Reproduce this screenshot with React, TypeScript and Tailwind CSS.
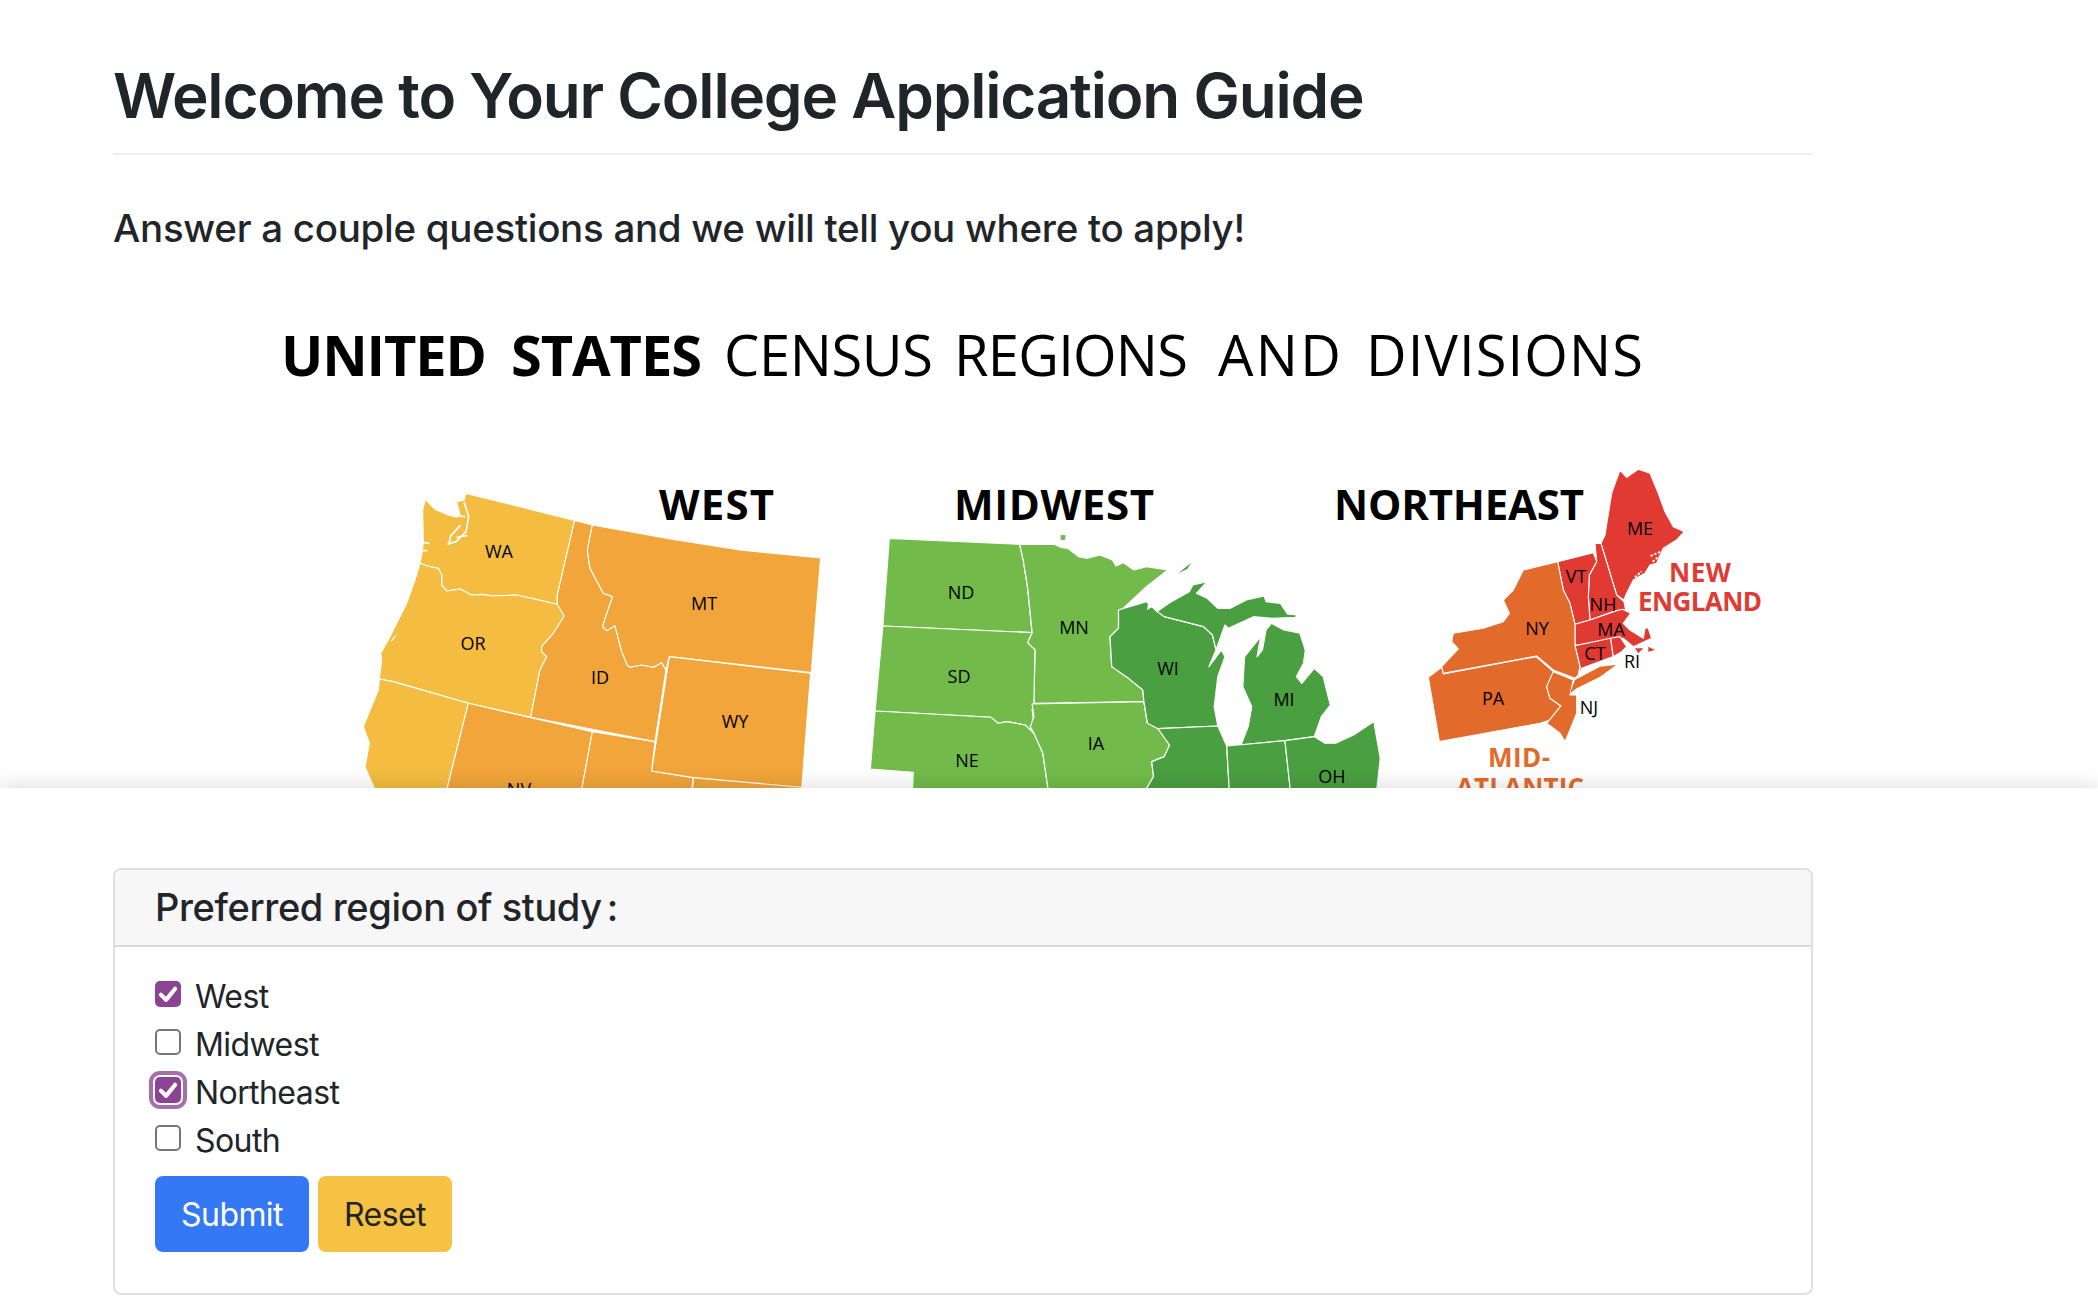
const ink = "#000";

function Label({ x, y, t }: { x: number; y: number; t: string }) {
  return (
    <text x={x} y={y + 6.5} textAnchor="middle" fontSize={18} fill={ink}>
      {t}
    </text>
  );
}

const yellow = "#f4bd41";
const orange = "#f1a53a";
const light = "#72bb4a";
const dark = "#4aa040";
const red = "#e03a33";
const rust = "#e26a2a";

const west: [string, string][] = [
  [yellow, "M378,100 L704,181 L652,405 L652,433 L530,405 L490,408 L460,408 L425,403 L395,405 L360,387 L320,393 L305,375 L305,345 L295,325 L262,318 L240,310 L245,285 L250,250 L248,150 L256,118 L285,148 L325,165 L350,172 L360,165 L350,125 L372,120 Z"],
  [yellow, "M240,310 L262,318 L295,325 L305,345 L305,375 L320,393 L360,387 L395,405 L425,403 L460,408 L530,405 L652,433 L673,468 L640,520 L605,560 L605,575 L620,590 L600,630 L572,772 L385,730 L160,665 L118,657 L125,600 L122,580 L150,530 L170,490 L200,430 L225,360 Z"],
  [yellow, "M118,657 L160,665 L385,730 L320,990 L105,990 L75,920 L88,850 L70,800 L115,690 Z"],
  [orange, "M385,730 L757,815 L725,990 L320,990 Z"],
  [orange, "M757,815 L945,845 L935,933 L1060,953 L1055,990 L725,990 Z"],
  [orange, "M704,181 L757,195 L742,270 L750,325 L790,400 L818,410 L797,470 L788,500 L800,512 L825,497 L845,575 L862,615 L870,622 L905,615 L940,622 L965,608 L978,630 L945,845 L572,772 L600,630 L620,590 L605,575 L605,560 L640,520 L673,468 L652,433 L652,405 Z"],
  [orange, "M757,195 L1000,238 L1200,270 L1442,294 L1414,638 L988,590 L978,630 L965,608 L940,622 L905,615 L870,622 L862,615 L845,575 L825,497 L800,512 L788,500 L797,470 L818,410 L790,400 L750,325 L742,270 Z"],
  [orange, "M988,590 L1412,640 L1385,990 L1060,953 L935,933 Z"],
  [orange, "M1060,953 L1385,982 L1383,990 L1058,990 Z"],
];

const midwest: [string, string][] = [
  [light, "M110,235 L475,253 L485,300 L497,380 L510,518 L92,498 Z"],
  [light, "M475,253 L572,253 L590,262 L610,265 L640,290 L665,295 L700,285 L735,300 L745,318 L765,308 L795,330 L830,320 L890,330 L830,380 L765,445 L752,452 L752,505 L728,530 L733,620 L780,655 L820,690 L823,725 L515,730 L518,570 L497,548 L510,518 L497,380 L485,300 Z"],
  [light, "M92,498 L510,518 L497,548 L518,570 L515,730 L510,750 L515,790 L505,800 L515,820 L490,795 L440,785 L415,790 L395,772 L70,753 Z"],
  [light, "M70,753 L395,772 L415,790 L440,785 L490,795 L515,820 L540,880 L555,990 L175,990 L177,937 L57,927 Z"],
  [light, "M510,732 L823,725 L833,790 L860,800 L895,855 L880,890 L845,905 L850,950 L828,990 L555,990 L540,880 L515,820 L505,800 L515,770 Z"],
  [dark, "M752,450 L830,425 L860,455 L880,470 L990,500 L1015,525 L1025,570 L1005,620 L1040,570 L1050,590 L1030,650 L1020,740 L1030,798 L862,806 L833,790 L823,725 L820,690 L780,655 L733,620 L728,530 L752,505 Z"],
  [dark, "M860,455 L900,425 L950,395 L960,375 L1000,365 L970,400 L1000,415 L1030,445 L1065,445 L1110,420 L1160,408 L1165,425 L1205,430 L1225,462 L1250,465 L1248,472 L1185,475 L1130,470 L1090,490 L1060,505 L1050,495 L1025,570 L1015,525 L990,500 L880,470 Z"],
  [dark, "M1180,490 L1215,510 L1260,520 L1275,570 L1270,610 L1250,650 L1265,670 L1300,625 L1325,650 L1345,735 L1320,770 L1300,830 L1218,842 L1095,855 L1115,800 L1125,740 L1100,680 L1105,590 L1150,530 L1140,590 L1155,570 L1165,510 Z"],
  [dark, "M862,806 L1030,798 L1055,858 L1062,990 L828,990 L850,950 L845,905 L880,890 L895,855 Z"],
  [dark, "M1055,858 L1218,842 L1233,990 L1062,990 Z"],
  [dark, "M1218,842 L1300,830 L1330,850 L1360,850 L1410,825 L1467,785 L1485,895 L1475,990 L1233,990 Z"],
];

const northeast: [string, string][] = [
  [red, "M660,60 L680,82 L715,58 L750,70 L775,130 L795,185 L820,230 L853,245 L830,270 L790,295 L770,340 L750,345 L735,370 L700,390 L680,430 L672,450 L650,435 L603,280 L615,255 L635,130 Z"],
  [red, "M585,280 L603,280 L650,435 L672,455 L677,480 L650,482 L570,510 L565,440 L568,375 L590,335 Z"],
  [red, "M473,335 L580,308 L590,335 L568,375 L565,440 L570,510 L525,523 L510,460 L490,420 Z"],
  [red, "M525,523 L570,510 L650,482 L668,478 L692,490 L670,520 L690,540 L730,565 L735,535 L720,530 L745,535 L755,565 L700,590 L670,565 L525,587 Z"],
  [red, "M525,587 L632,565 L640,620 L545,655 L535,680 L540,650 Z"],
  [red, "M632,565 L660,560 L680,590 L665,605 L640,620 Z"],
  [rust, "M473,335 L490,420 L510,460 L525,523 L525,587 L540,650 L535,675 L525,685 L460,660 L410,618 L130,670 L125,650 L175,597 L155,575 L160,550 L250,535 L310,515 L328,490 L310,450 L340,420 L370,360 Z"],
  [rust, "M130,672 L408,620 L460,665 L440,710 L450,745 L483,768 L450,810 L420,820 L118,875 L85,682 L125,652 Z"],
  [rust, "M460,665 L520,690 L510,735 L530,735 L530,790 L510,840 L495,875 L480,850 L440,820 L483,768 L450,745 L440,710 Z"],
];

function States({ items }: { items: [string, string][] }) {
  return (
    <>
      {items.map(([fill, d]) => (
        <path key={d} d={d} fill={fill} stroke="#fff" strokeWidth={3.4} strokeLinejoin="round" />
      ))}
    </>
  );
}

function UsMap() {
  return (
    <svg
      viewBox="113 300 1700 478"
      className="block h-[478px] w-[1700px] shrink-0 overflow-visible"
      style={{ fontFamily: '"Open Sans", "Noto Sans", sans-serif' }}
    >
      <text x={281} y={376} fontSize={56} fontWeight={700} fill={ink} textLength={206}>UNITED</text>
      <text x={511} y={376} fontSize={56} fontWeight={700} fill={ink} textLength={191}>STATES</text>
      <text x={724} y={376} fontSize={56} fill={ink} textLength={209}>CENSUS</text>
      <text x={954} y={376} fontSize={56} fill={ink} textLength={234}>REGIONS</text>
      <text x={1218} y={376} fontSize={56} fill={ink} textLength={123}>AND</text>
      <text x={1366} y={376} fontSize={56} fill={ink} textLength={277}>DIVISIONS</text>

      <text x={659} y={520} fontSize={42} fontWeight={700} fill={ink} textLength={115}>WEST</text>
      <text x={954} y={520} fontSize={42} fontWeight={700} fill={ink} textLength={200}>MIDWEST</text>
      <text x={1334} y={520} fontSize={42} fontWeight={700} fill={ink} textLength={250}>NORTHEAST</text>

      <g transform="translate(340 460) scale(0.3333)">
        <States items={west} />
        <path
          d="M372,125 L386,170 L378,215 L348,245 L322,252 M362,195 L332,228 L326,255 M376,170 L358,168 M350,232 L382,226 M250,247 L268,250 M248,272 L262,272"
          fill="none"
          stroke="#fff"
          strokeWidth={5}
        />
        <path d="M150,545 L172,518 L160,540 Z" fill="#fff" />
      </g>

      <g transform="translate(850 460) scale(0.3571 0.3333)">
        <States items={midwest} />
        <path d="M590,225 L604,226 L602,240 L590,240 Z" fill={light} />
        <path d="M920,340 L955,308 L945,326 Z" fill={dark} />
        <path d="M835,425 L855,412 L848,440 L832,450 Z" fill="#fff" />
      </g>

      <g transform="translate(1400 450) scale(0.3333)">
        <States items={northeast} />
        <path d="M510,730 L525,690 L600,650 L648,645 L600,680 L530,715 Z" fill={rust} />
        <path d="M745,590 L765,600 L745,605 Z" fill={red} />
        <path d="M705,595 L730,595 L715,610 Z" fill={red} />
        <path d="M752,318 L790,302 M758,335 L778,318 M705,382 L725,364" fill="none" stroke="#fff" strokeWidth={6} strokeDasharray="7 5" />
      </g>

      <Label x={499} y={551} t="WA" />
      <Label x={704} y={603} t="MT" />
      <Label x={473} y={643} t="OR" />
      <Label x={600} y={677} t="ID" />
      <Label x={735} y={721} t="WY" />
      <Label x={519} y={789} t="NV" />

      <Label x={961} y={592} t="ND" />
      <Label x={1074} y={627} t="MN" />
      <Label x={959} y={676} t="SD" />
      <Label x={1168} y={668} t="WI" />
      <Label x={1284} y={699} t="MI" />
      <Label x={1096} y={743} t="IA" />
      <Label x={967} y={760} t="NE" />
      <Label x={1332} y={776} t="OH" />

      <Label x={1640} y={528} t="ME" />
      <Label x={1576} y={576} t="VT" />
      <Label x={1603} y={604} t="NH" />
      <Label x={1537} y={628} t="NY" />
      <Label x={1611} y={629} t="MA" />
      <Label x={1595} y={653} t="CT" />
      <Label x={1632} y={661} t="RI" />
      <Label x={1589} y={707} t="NJ" />
      <Label x={1493} y={698} t="PA" />

      <text x={1700} y={582} textAnchor="middle" fontSize={26} fontWeight={700} fill={red} textLength={62}>NEW</text>
      <text x={1700} y={611} textAnchor="middle" fontSize={26} fontWeight={700} fill={red} textLength={124}>ENGLAND</text>
      <text x={1519} y={767} textAnchor="middle" fontSize={26} fontWeight={700} fill={rust} textLength={62}>MID-</text>
      <text x={1520} y={797} textAnchor="middle" fontSize={26} fontWeight={700} fill={rust} textLength={128}>ATLANTIC</text>
    </svg>
  );
}

function Region({ name, checked, focus }: { name: string; checked?: boolean; focus?: boolean }) {
  return (
    <label className="flex h-12 items-start">
      <span className="relative mt-[9px] h-[26px] w-[26px] shrink-0">
        <input
          type="checkbox"
          defaultChecked={checked}
          className={
            checked
              ? focus
                ? "block h-[26px] w-[26px] appearance-none rounded-[5px] bg-[#8b4393] shadow-[0_0_0_2px_#fff,0_0_0_6px_#a66fab]"
                : "block h-[26px] w-[26px] appearance-none rounded-[5px] bg-[#8b4393]"
              : "block h-[26px] w-[26px] appearance-none rounded-[5px] border-2 border-[#767676] bg-white"
          }
        />
        {checked && (
          <svg viewBox="0 0 20 20" className="pointer-events-none absolute inset-0 h-[26px] w-[26px]">
            <path d="M4.5 10.5 L8.5 14.5 L15.5 6" fill="none" stroke="#fff" strokeWidth={3.2} strokeLinecap="round" strokeLinejoin="round" />
          </svg>
        )}
      </span>
      <span className="ml-[14px] pt-px text-[32px] leading-[48px] tracking-[-0.018em]">{name}</span>
    </label>
  );
}

export default function App() {
  return (
    <div className="min-h-[1314px] bg-white font-['Inter','Liberation_Sans',sans-serif] text-[#212529]">
      <section className="flex h-[788px] flex-col overflow-hidden pl-[113px]">
        <div className="w-[1700px]">
          <h1 className="h-[155px] border-b-2 border-[#eeeef3] pt-[58px] text-[62px] leading-[76px] font-[560] tracking-[-0.0195em]">
            Welcome to Your College Application Guide
          </h1>
          <p className="mt-[50px] text-[38.5px] leading-[46px] font-[550] tracking-[-0.0075em]">
            Answer a couple questions and we will tell you where to apply!
          </p>
        </div>
        <div className="mt-[49px]">
          <UsMap />
        </div>
      </section>
      <section className="relative bg-white pt-[80px] pb-[19px] pl-[113px] shadow-[0_-2px_20px_rgba(0,0,0,0.14)]">
        <div className="w-[1700px] rounded-lg border-2 border-[#dfdfdf]">
          <div className="flex h-[77px] items-center rounded-t-md border-b-2 border-[#d9d9d9] bg-[#f7f7f7] pl-[40px] text-[38px] font-[550] tracking-[-0.01em]">
            Preferred region of study<span className="ml-[5px]">:</span>
          </div>
          <div className="pt-[25px] pr-[40px] pb-[41px] pl-[40px]">
            <Region name="West" checked />
            <Region name="Midwest" />
            <Region name="Northeast" checked focus />
            <Region name="South" />
            <div className="mt-3 flex gap-[9px]">
              <button className="h-[76px] w-[154px] rounded-lg bg-[#3578f6] pt-px text-[32px] tracking-[-0.018em] text-white">Submit</button>
              <button className="h-[76px] w-[134px] rounded-lg bg-[#f6c244] pt-px text-[32px] tracking-[-0.018em] text-[#212529]">Reset</button>
            </div>
          </div>
        </div>
      </section>
    </div>
  );
}
